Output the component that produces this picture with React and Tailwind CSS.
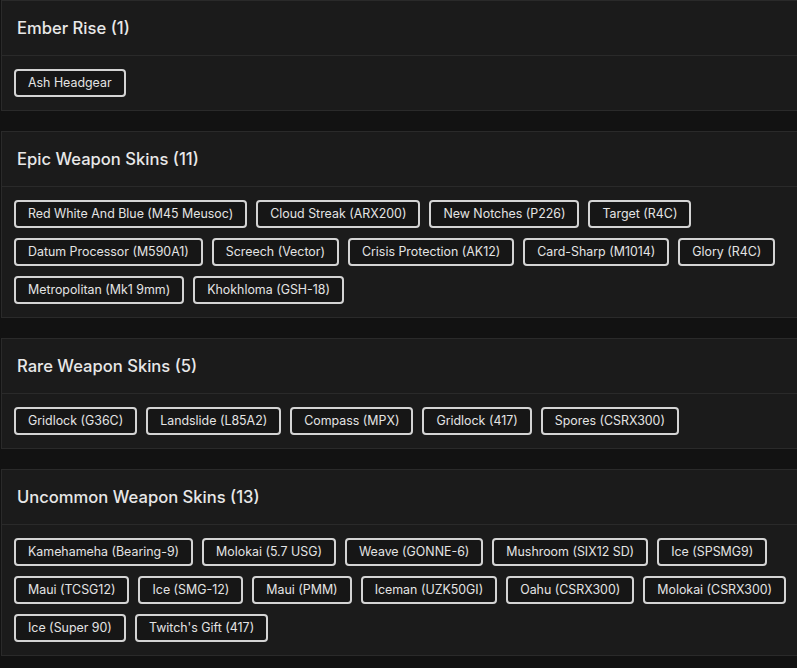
import React from "react";

const sections = [
  { title: "Ember Rise (1)", items: ["Ash Headgear"] },
  {
    title: "Epic Weapon Skins (11)",
    items: [
      "Red White And Blue (M45 Meusoc)",
      "Cloud Streak (ARX200)",
      "New Notches (P226)",
      "Target (R4C)",
      "Datum Processor (M590A1)",
      "Screech (Vector)",
      "Crisis Protection (AK12)",
      "Card-Sharp (M1014)",
      "Glory (R4C)",
      "Metropolitan (Mk1 9mm)",
      "Khokhloma (GSH-18)",
    ],
  },
  {
    title: "Rare Weapon Skins (5)",
    items: ["Gridlock (G36C)", "Landslide (L85A2)", "Compass (MPX)", "Gridlock (417)", "Spores (CSRX300)"],
  },
  {
    title: "Uncommon Weapon Skins (13)",
    items: [
      "Kamehameha (Bearing-9)",
      "Molokai (5.7 USG)",
      "Weave (GONNE-6)",
      "Mushroom (SIX12 SD)",
      "Ice (SPSMG9)",
      "Maui (TCSG12)",
      "Ice (SMG-12)",
      "Maui (PMM)",
      "Iceman (UZK50GI)",
      "Oahu (CSRX300)",
      "Molokai (CSRX300)",
      "Ice (Super 90)",
      "Twitch's Gift (417)",
    ],
  },
];

export default function App() {
  return (
    <div
      className="min-h-screen w-full overflow-hidden bg-[#121212] pl-px"
      style={{ fontFamily: "Inter, 'Noto Sans', sans-serif" }}
    >
      <div className="flex flex-col gap-5 mr-[-4px]">
        {sections.map((s) => (
          <div key={s.title} className="border border-[#2a2a2a] bg-[#1b1b1b]">
            <div className="h-[55px] flex items-center px-[15px] border-b border-[#2a2a2a]">
              <h2 className="text-[16.6px] font-medium text-[#e8e8e8]">{s.title}</h2>
            </div>
            <div className="flex flex-wrap gap-x-[9px] gap-y-[10px] px-3 pt-[13px] pb-[13px]">
              {s.items.map((it) => (
                <span
                  key={it}
                  className="h-7 flex items-center px-3 rounded-[4px] border-2 border-[#d4d4d4] bg-[#161616] text-[12.4px] text-[#e4e4e4]"
                >
                  {it}
                </span>
              ))}
            </div>
          </div>
        ))}
      </div>
    </div>
  );
}
